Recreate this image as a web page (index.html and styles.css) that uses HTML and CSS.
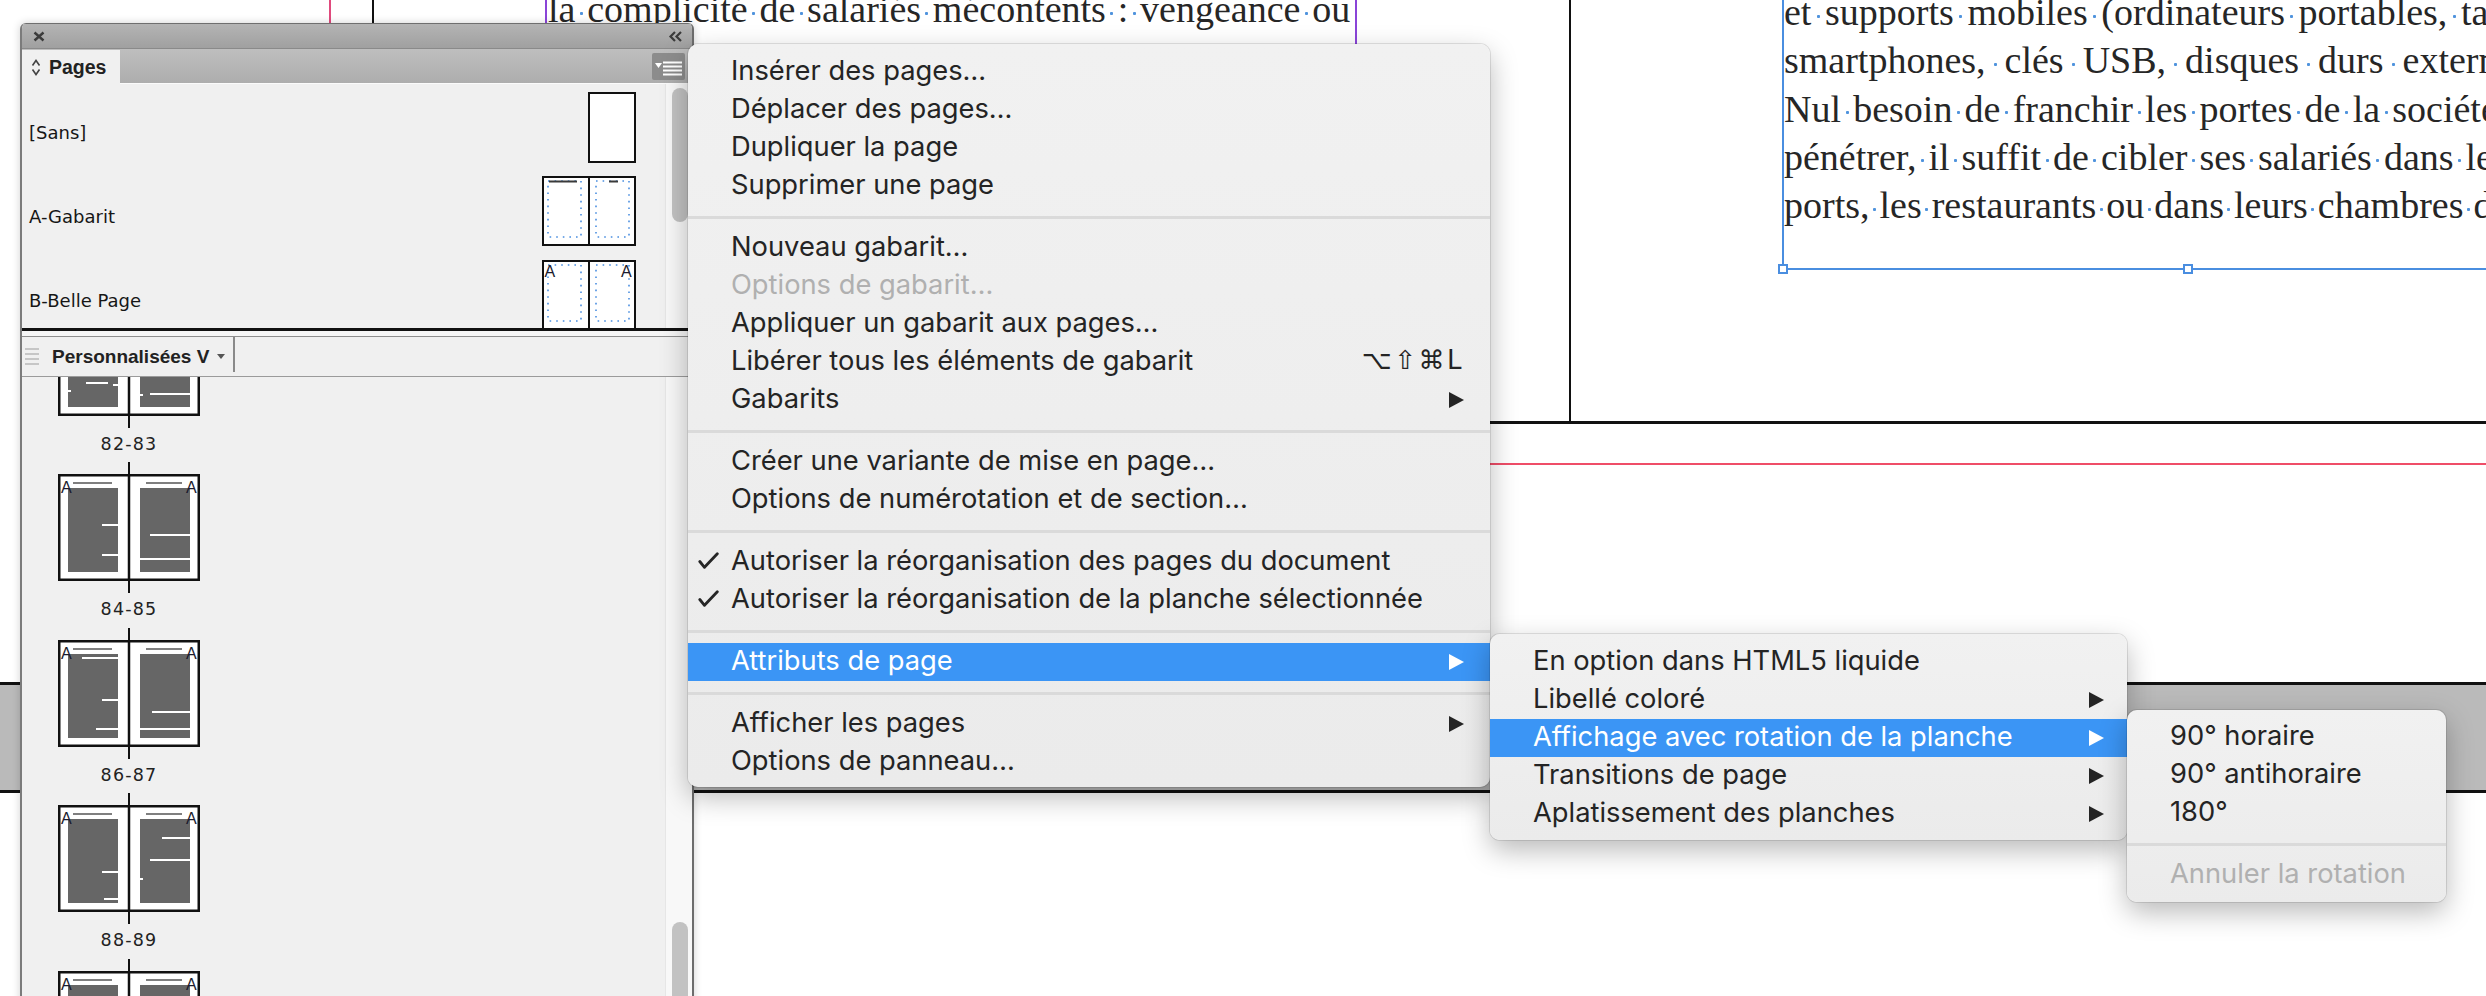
FILE: index.html
```html
<!DOCTYPE html>
<html lang="fr">
<head>
<meta charset="utf-8">
<title>Pages – menu du panneau</title>
<link rel="stylesheet" href="styles.css">
</head>
<body>
<div class="screen">

  <div class="canvas">
    <div class="guide red-v"></div>
    <div class="guide black-v1"></div>
    <div class="guide purple-v1"></div>
    <div class="guide purple-v2"></div>
    <div class="guide black-v2"></div>
    <div class="guide black-h"></div>
    <div class="guide red-h"></div>
    <div class="pasteboard"></div>

    <div class="doc-text top-line">la<span class="s"> </span>complicité<span class="s"> </span>de<span class="s"> </span>salariés<span class="s"> </span>mécontents<span class="s"> </span>:<span class="s"> </span>vengeance<span class="s"> </span>ou</div>

    <div class="frame">
      <div class="doc-text col">
        <div class="ln l1">et<span class="s"> </span>supports<span class="s"> </span>mobiles<span class="s"> </span>(ordinateurs<span class="s"> </span>portables,<span class="s"> </span>tablettes,</div>
        <div class="ln l2">smartphones,<span class="s"> </span>clés<span class="s"> </span>USB,<span class="s"> </span>disques<span class="s"> </span>durs<span class="s"> </span>externes).</div>
        <div class="ln l3">Nul<span class="s"> </span>besoin<span class="s"> </span>de<span class="s"> </span>franchir<span class="s"> </span>les<span class="s"> </span>portes<span class="s"> </span>de<span class="s"> </span>la<span class="s"> </span>société<span class="s"> </span>pour</div>
        <div class="ln l4">pénétrer,<span class="s"> </span>il<span class="s"> </span>suffit<span class="s"> </span>de<span class="s"> </span>cibler<span class="s"> </span>ses<span class="s"> </span>salariés<span class="s"> </span>dans<span class="s"> </span>les<span class="s"> </span>aéro-</div>
        <div class="ln l5">ports,<span class="s"> </span>les<span class="s"> </span>restaurants<span class="s"> </span>ou<span class="s"> </span>dans<span class="s"> </span>leurs<span class="s"> </span>chambres<span class="s"> </span>d’hôtel.</div>
      </div>
      <span class="handle h1"></span>
      <span class="handle h2"></span>
    </div>
  </div>

  <div class="panel">
    <div class="titlebar">
      <svg width="12" height="11" viewBox="0 0 12 11"><path d="M1.5 1.5L10.5 9.5M10.5 1.5L1.5 9.5" stroke="#3b3b3b" stroke-width="2.4"/></svg>
      <svg width="15" height="11" viewBox="0 0 15 11"><path d="M7 1L2.5 5.5L7 10M13 1L8.5 5.5L13 10" fill="none" stroke="#3b3b3b" stroke-width="2.2"/></svg>
    </div>
    <div class="tabbar">
      <div class="tab">
        <svg width="10" height="17" viewBox="0 0 10 17"><path d="M1.5 6.5L5 1.5L8.5 6.5M1.5 10.5L5 15.5L8.5 10.5" fill="none" stroke="#444" stroke-width="1.6"/></svg>
        <span>Pages</span>
      </div>
      <div class="flyout">
        <svg width="33" height="27" viewBox="0 0 33 27"><path d="M3 10H10L6.5 15Z" fill="#fff"/><path d="M11 9.5H30M11 13.5H30M11 17.5H30M11 21.5H30" stroke="#fff" stroke-width="2"/></svg>
      </div>
    </div>

    <div class="masters">
      <div class="mlist">
        <div class="mrow">
          <span class="mlabel">[Sans]</span>
          <svg class="mthumb" width="48" height="71" viewBox="0 0 48 71"><rect x="1" y="1" width="46" height="69" fill="#fff" stroke="#111" stroke-width="2"/></svg>
        </div>
        <div class="mrow">
          <span class="mlabel">A-Gabarit</span>
          <svg class="mthumb" width="94" height="70" viewBox="0 0 94 70">
            <rect x="1" y="1" width="92" height="68" fill="#fff" stroke="#111" stroke-width="2"/>
            <path d="M47 0V70" stroke="#111" stroke-width="2"/>
            <rect x="6" y="5" width="33" height="56" fill="none" stroke="#4a8ee0" stroke-width="1.6" stroke-dasharray="1.6 5"/>
            <rect x="54" y="5" width="33" height="56" fill="none" stroke="#4a8ee0" stroke-width="1.6" stroke-dasharray="1.6 5"/>
            <path d="M7 5.5H35M67 5.5H76" stroke="#3a3a3a" stroke-width="2.2"/>
          </svg>
        </div>
        <div class="mrow">
          <span class="mlabel">B-Belle Page</span>
          <svg class="mthumb" width="94" height="70" viewBox="0 0 94 70">
            <rect x="1" y="1" width="92" height="68" fill="#fff" stroke="#111" stroke-width="2"/>
            <path d="M47 0V70" stroke="#111" stroke-width="2"/>
            <rect x="6" y="5" width="33" height="56" fill="none" stroke="#4a8ee0" stroke-width="1.6" stroke-dasharray="1.6 5"/>
            <rect x="54" y="5" width="33" height="56" fill="none" stroke="#4a8ee0" stroke-width="1.6" stroke-dasharray="1.6 5"/>
            <text x="2.5" y="17">A</text>
            <text x="79" y="17">A</text>
          </svg>
        </div>
      </div>
      <div class="track"><div class="sbar"></div></div>
    </div>

    <div class="divider"></div>

    <div class="viewrow">
      <svg class="grip" width="14" height="20" viewBox="0 0 14 20"><path d="M0 2H14M0 7H14M0 12H14M0 17H14" stroke="#c6c6c6" stroke-width="2"/></svg>
      <span class="viewname">Personnalisées V</span>
      <span class="caret"></span>
      <span class="vsep"></span>
    </div>

    <div class="pages">
      <div class="plist">
        <div class="plist-inner">
          <div class="spread">
            <span class="spine"></span>
            <svg class="sthumb" width="142" height="107" viewBox="0 0 142 107">
              <rect x="1.25" y="1.25" width="139.5" height="104.5" fill="#fff" stroke="#111" stroke-width="2.5"/>
              <rect x="10" y="14" width="50" height="84" fill="#666"/>
              <rect x="82" y="14" width="50" height="84" fill="#666"/>
              <path d="M15 9H54M88 9H124" stroke="#555" stroke-width="1.6"/>
              <path d="M28 74H50M55 76H60M10 82H13M92 85H132M82 86H85" stroke="#fff" stroke-width="2"/>
              <text x="3" y="19">A</text><text x="128" y="19">A</text>
              <path d="M71 0V107" stroke="#111" stroke-width="2.5"/>
            </svg>
            <span class="spine"></span>
            <span class="slabel">82-83</span>
          </div>
          <div class="spread">
            <span class="spine"></span>
            <svg class="sthumb" width="142" height="107" viewBox="0 0 142 107">
              <rect x="1.25" y="1.25" width="139.5" height="104.5" fill="#fff" stroke="#111" stroke-width="2.5"/>
              <rect x="10" y="14" width="50" height="84" fill="#666"/>
              <rect x="82" y="14" width="50" height="84" fill="#666"/>
              <path d="M15 9H54M88 9H124" stroke="#555" stroke-width="1.6"/>
              <path d="M44 51H60M44 81H60M92 61H132M82 85H132" stroke="#fff" stroke-width="2"/>
              <text x="3" y="19">A</text><text x="128" y="19">A</text>
              <path d="M71 0V107" stroke="#111" stroke-width="2.5"/>
            </svg>
            <span class="spine"></span>
            <span class="slabel">84-85</span>
          </div>
          <div class="spread">
            <span class="spine"></span>
            <svg class="sthumb" width="142" height="107" viewBox="0 0 142 107">
              <rect x="1.25" y="1.25" width="139.5" height="104.5" fill="#fff" stroke="#111" stroke-width="2.5"/>
              <rect x="10" y="14" width="50" height="84" fill="#666"/>
              <rect x="82" y="14" width="50" height="84" fill="#666"/>
              <path d="M15 9H54M88 9H124" stroke="#555" stroke-width="1.6"/>
              <path d="M24 18H60M44 60H60M38 89H60M94 72H132M82 89H132" stroke="#fff" stroke-width="2"/>
              <text x="3" y="19">A</text><text x="128" y="19">A</text>
              <path d="M71 0V107" stroke="#111" stroke-width="2.5"/>
            </svg>
            <span class="spine"></span>
            <span class="slabel">86-87</span>
          </div>
          <div class="spread">
            <span class="spine"></span>
            <svg class="sthumb" width="142" height="107" viewBox="0 0 142 107">
              <rect x="1.25" y="1.25" width="139.5" height="104.5" fill="#fff" stroke="#111" stroke-width="2.5"/>
              <rect x="10" y="14" width="50" height="84" fill="#666"/>
              <rect x="82" y="14" width="50" height="84" fill="#666"/>
              <path d="M15 9H54M88 9H124" stroke="#555" stroke-width="1.6"/>
              <path d="M44 67H60M46 94H60M104 33H132M92 55H132M82 74H85" stroke="#fff" stroke-width="2"/>
              <text x="3" y="19">A</text><text x="128" y="19">A</text>
              <path d="M71 0V107" stroke="#111" stroke-width="2.5"/>
            </svg>
            <span class="spine"></span>
            <span class="slabel">88-89</span>
          </div>
          <div class="spread">
            <span class="spine"></span>
            <svg class="sthumb" width="142" height="107" viewBox="0 0 142 107">
              <rect x="1.25" y="1.25" width="139.5" height="104.5" fill="#fff" stroke="#111" stroke-width="2.5"/>
              <rect x="10" y="14" width="50" height="84" fill="#666"/>
              <rect x="82" y="14" width="50" height="84" fill="#666"/>
              <path d="M15 9H54M88 9H124" stroke="#555" stroke-width="1.6"/>
              <text x="3" y="19">A</text><text x="128" y="19">A</text>
              <path d="M71 0V107" stroke="#111" stroke-width="2.5"/>
            </svg>
            <span class="spine"></span>
            <span class="slabel">90-91</span>
          </div>
        </div>
      </div>
      <div class="track"><div class="sbar"></div></div>
    </div>
  </div>

  <div class="menu main-menu">
    <div class="item"><span class="label">Insérer des pages…</span></div>
    <div class="item"><span class="label">Déplacer des pages…</span></div>
    <div class="item"><span class="label">Dupliquer la page</span></div>
    <div class="item"><span class="label">Supprimer une page</span></div>
    <div class="sep"></div>
    <div class="item"><span class="label">Nouveau gabarit…</span></div>
    <div class="item disabled"><span class="label">Options de gabarit…</span></div>
    <div class="item"><span class="label">Appliquer un gabarit aux pages…</span></div>
    <div class="item"><span class="label">Libérer tous les éléments de gabarit</span><span class="kbd">⌥⇧⌘L</span></div>
    <div class="item"><span class="label">Gabarits</span><span class="arrow"></span></div>
    <div class="sep"></div>
    <div class="item"><span class="label">Créer une variante de mise en page…</span></div>
    <div class="item"><span class="label">Options de numérotation et de section…</span></div>
    <div class="sep"></div>
    <div class="item"><svg class="check" width="21" height="17" viewBox="0 0 21 17"><path d="M1.8 9.5L6.5 15.3L19.3 1.7" fill="none" stroke="#262626" stroke-width="2.8" stroke-linecap="round" stroke-linejoin="round"/></svg><span class="label">Autoriser la réorganisation des pages du document</span></div>
    <div class="item"><svg class="check" width="21" height="17" viewBox="0 0 21 17"><path d="M1.8 9.5L6.5 15.3L19.3 1.7" fill="none" stroke="#262626" stroke-width="2.8" stroke-linecap="round" stroke-linejoin="round"/></svg><span class="label">Autoriser la réorganisation de la planche sélectionnée</span></div>
    <div class="sep"></div>
    <div class="item active"><span class="label">Attributs de page</span><span class="arrow"></span></div>
    <div class="sep"></div>
    <div class="item"><span class="label">Afficher les pages</span><span class="arrow"></span></div>
    <div class="item"><span class="label">Options de panneau…</span></div>
  </div>

  <div class="menu sub1">
    <div class="item"><span class="label">En option dans HTML5 liquide</span></div>
    <div class="item"><span class="label">Libellé coloré</span><span class="arrow"></span></div>
    <div class="item active"><span class="label">Affichage avec rotation de la planche</span><span class="arrow"></span></div>
    <div class="item"><span class="label">Transitions de page</span><span class="arrow"></span></div>
    <div class="item"><span class="label">Aplatissement des planches</span><span class="arrow"></span></div>
  </div>

  <div class="menu sub2">
    <div class="item"><span class="label">90° horaire</span></div>
    <div class="item"><span class="label">90° antihoraire</span></div>
    <div class="item"><span class="label">180°</span></div>
    <div class="sep"></div>
    <div class="item disabled"><span class="label">Annuler la rotation</span></div>
  </div>

</div>
</body>
</html>
```

FILE: styles.css
```css
* { box-sizing: border-box; margin: 0; padding: 0; }

html, body {
  width: 2486px;
  height: 996px;
  overflow: hidden;
  background: #fff;
}

body {
  font-family: Inter, "Liberation Sans", sans-serif;
}

.screen {
  position: relative;
  width: 2486px;
  height: 996px;
  overflow: hidden;
  background: #fff;
}

/* ---------- document canvas ---------- */
.canvas { position: absolute; inset: 0; }
.guide { position: absolute; }
.red-v { left: 329px; top: 0; width: 2px; height: 465px; background: #e04a7d; }
.black-v1 { left: 372px; top: 0; width: 2px; height: 424px; background: #111; }
.purple-v1 { left: 545px; top: 0; width: 2px; height: 380px; background: #8a44d8; }
.purple-v2 { left: 1355px; top: 0; width: 2px; height: 380px; background: #8a44d8; }
.black-v2 { left: 1569px; top: 0; width: 2px; height: 424px; background: #111; }
.black-h { left: 372px; right: 0; top: 421px; height: 3px; background: #111; }
.red-h { left: 329px; right: 0; top: 463px; height: 2px; background: #ef4d68; }
.pasteboard {
  position: absolute;
  left: 0; right: 0; top: 682px; height: 111px;
  background: #bababa;
  border-top: 3px solid #111;
  border-bottom: 3px solid #111;
}

.doc-text {
  font-family: "Liberation Serif", "Times New Roman", serif;
  font-size: 38px;
  line-height: 48.3px;
  color: #262626;
  white-space: nowrap;
}
.doc-text .s {
  display: inline-block;
  white-space: pre;
  background: radial-gradient(circle, #4f93dd 0 1.3px, transparent 1.8px) no-repeat;
  background-size: 5px 5px;
  background-position: 50% 59%;
}
.top-line { position: absolute; left: 548px; top: -15px; }
.top-line .s { width: 11.8px; }

.frame {
  position: absolute;
  left: 1782px; top: 0;
  width: 830px; height: 270px;
  border-left: 2px solid #4a8ee0;
  border-bottom: 2px solid #4a8ee0;
}
.col { margin-top: -12px; }
.l1 .s { width: 13.6px; }
.l2 .s { width: 19px; }
.l3 .s { width: 12.2px; }
.l4 .s { width: 12px; }
.l5 .s { width: 10px; }
.handle {
  position: absolute;
  bottom: -6px;
  width: 10px; height: 10px;
  background: #fff;
  border: 2px solid #4a8ee0;
}
.h1 { left: -6px; }
.h2 { left: 399px; }

/* ---------- Pages panel ---------- */
.panel {
  position: absolute;
  left: 20px; top: 23px;
  width: 674px; height: 990px;
  background: #f0f0f0;
  border-left: 2px solid #7b7b7b;
  border-right: 2px solid #6d6d6d;
  border-radius: 6px 6px 0 0;
  display: flex;
  flex-direction: column;
  font-family: "Liberation Sans", Arial, sans-serif;
  color: #1d1d1d;
  overflow: hidden;
  box-shadow: 0 0 8px rgba(0,0,0,.18);
}
.titlebar {
  flex: none;
  height: 25px;
  background: linear-gradient(#b4b4b4, #a0a0a0);
  border-top: 1px solid #6f6f6f;
  display: flex;
  align-items: center;
  justify-content: space-between;
  padding: 0 9px 0 11px;
}
.tabbar {
  flex: none;
  height: 36px;
  background: linear-gradient(#bebebe, #adadad);
  border-top: 1px solid #8a8a8a;
  box-shadow: inset 0 -1px #fbfbfb;
  display: flex;
  justify-content: space-between;
  padding-right: 7px;
}
.tab {
  align-self: flex-end;
  height: 34px;
  width: 98px;
  background: #f0f0f0;
  display: flex;
  align-items: center;
  gap: 8px;
  padding-left: 9px;
  font-weight: bold;
  font-size: 19.5px;
  color: #222;
}
.flyout {
  margin-top: 4px;
  width: 33px; height: 27px;
  background: #8c8c8c;
  border-radius: 2px;
}
.flyout svg { display: block; }

.masters {
  flex: none;
  height: 244px;
  display: flex;
}
.mlist {
  flex: 1;
  padding: 0 29px 0 7px;
  overflow: hidden;
}
.mrow {
  height: 84px;
  display: flex;
  justify-content: space-between;
  align-items: flex-start;
}
.mlabel {
  margin-top: 39px;
  line-height: 20px;
  font-family: "DejaVu Sans", sans-serif;
  font-size: 18px;
  color: #161616;
}
.mthumb { margin-top: 8px; display: block; flex: none; }
.mthumb text, .sthumb text {
  font-family: "Liberation Sans", Arial, sans-serif;
  font-size: 16px;
  fill: #1b1b2e;
}

.track {
  flex: none;
  width: 27px;
  background: #f8f8f8;
  border-left: 1px solid #e6e6e6;
}
.sbar {
  margin-left: 6px;
  width: 16px;
  border-radius: 8px;
  background: #c2c2c2;
}
.masters .sbar { margin-top: 4px; height: 134px; }

.divider {
  flex: none;
  height: 9px;
  border-top: 3px solid #111;
  background: #f6f6f6;
  border-bottom: 1px solid #8e8e8e;
}

.viewrow {
  flex: none;
  height: 40px;
  border-bottom: 1px solid #9b9b9b;
  display: flex;
  align-items: center;
  padding-left: 3px;
}
.grip { flex: none; }
.viewname {
  margin-left: 13px;
  font-weight: bold;
  font-size: 19px;
  color: #222;
}
.caret {
  margin-left: 8px;
  width: 0; height: 0;
  border-top: 5px solid #555;
  border-left: 4px solid transparent;
  border-right: 4px solid transparent;
}
.vsep {
  margin-left: 8px;
  align-self: flex-start;
  width: 2px;
  height: 35px;
  background: #8a8a8a;
}

.pages {
  flex: 1;
  display: flex;
  min-height: 0;
}
.plist {
  flex: 1;
  overflow: hidden;
  padding-left: 36px;
}
.plist-inner { margin-top: -80.5px; }
.spread {
  width: 142px;
  display: flex;
  flex-direction: column;
  align-items: center;
}
.spine { width: 2.5px; height: 12px; background: #111; }
.sthumb { display: block; }
.slabel {
  height: 34.5px;
  line-height: 32px;
  font-family: "DejaVu Sans", sans-serif;
  font-size: 17.5px;
  letter-spacing: 1.2px;
  color: #222;
}
.pages .sbar { margin-top: 545px; height: 140px; }

/* ---------- menus ---------- */
.menu {
  position: absolute;
  background: linear-gradient(#f1f1f1, #ebebeb);
  border-radius: 10px;
  box-shadow: 0 0 0 1px rgba(0,0,0,.10), 0 10px 28px rgba(0,0,0,.28);
  font-family: Inter, "Liberation Sans", sans-serif;
  font-size: 27.3px;
  color: #242424;
  overflow: hidden;
}
.main-menu { left: 688px; top: 44px; width: 802px; height: 743px; padding-top: 9px; }
.sub1 { left: 1490px; top: 634px; width: 637px; height: 206px; padding-top: 9px; }
.sub2 { left: 2127px; top: 710px; width: 319px; height: 192px; padding-top: 8px; }

.item {
  position: relative;
  height: 38px;
  display: flex;
  align-items: center;
  padding: 0 26px 4px 43px;
  white-space: nowrap;
}
.sub1 .item, .sub2 .item { padding-right: 23px; }
.item .label { flex: 1; }
.item.active { background: #3b95f5; color: #fff; }
.item.disabled { color: #b0b0b0; }
.check {
  position: absolute;
  left: 10px;
  top: 9px;
}
.kbd {
  font-family: "DejaVu Sans", sans-serif;
  font-size: 26px;
  letter-spacing: 2.5px;
}
.arrow {
  flex: none;
  margin-top: 4px;
  width: 0; height: 0;
  border-left: 15px solid currentColor;
  border-top: 8px solid transparent;
  border-bottom: 8px solid transparent;
}
.sep {
  height: 24px;
  display: flex;
  align-items: center;
}
.sep::after {
  content: "";
  flex: 1;
  height: 3px;
  background: #dadada;
}
```
